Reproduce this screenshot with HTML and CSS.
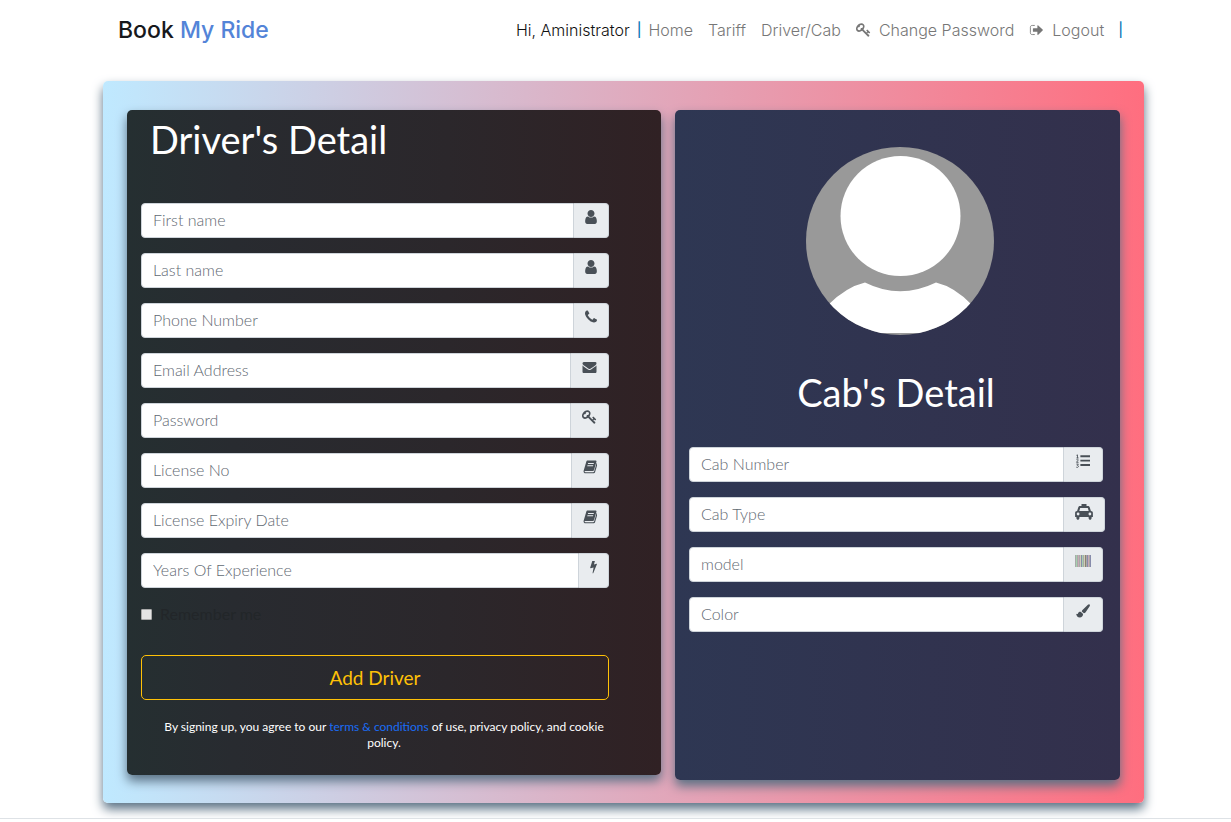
FILE: index.html
```html
<!DOCTYPE html>
<html lang="en">
<head>
<meta charset="utf-8">
<title>Book My Ride</title>
<link rel="stylesheet" href="styles.css">
</head>
<body>
<svg class="sprite" aria-hidden="true">
  <symbol id="user" viewBox="256 128 1280 1536"><path d="M1536 1399q0 109-62.5 187t-150.5 78h-854q-88 0-150.5-78t-62.5-187q0-85 8.5-160.5t31.5-152 58.5-131 94-89 134.5-34.5q131 128 313 128t313-128q76 0 134.5 34.5t94 89 58.5 131 31.5 152 8.5 160.5zm-256-887q0 159-112.5 271.5t-271.5 112.5-271.5-112.5-112.5-271.5 112.5-271.5 271.5-112.5 271.5 112.5 112.5 271.5z"/></symbol>
  <symbol id="phone" viewBox="192 128 1408 1536"><path d="M1600 1240q0 27-10 70.5t-21 68.5q-21 50-122 106-94 51-186 51-27 0-53-3.5t-57.5-12.5-47-14.5-55.5-20.5-49-18q-98-35-175-83-127-79-264-216t-216-264q-48-77-83-175-3-9-18-49t-20.5-55.5-14.5-47-12.5-57.5-3.5-53q0-92 51-186 56-101 106-122 25-11 68.5-21t70.5-10q14 0 21 3 18 6 53 76 11 19 30 54t35 63.5 31 53.5q3 4 17.5 25t21.5 35.5 7 28.5q0 20-28.5 50t-62 55-62 53-28.5 46q0 9 5 22.5t8.5 20.5 14 24 11.5 19q76 137 174 235t235 174q2 1 19 11.5t24 14 20.5 8.5 22.5 5q18 0 46-28.5t53-62 55-62 50-28.5q14 0 28.5 7t35.5 21.5 25 17.5q25 15 53.5 31t63.5 35 54 30q70 35 76 53 3 7 3 21z"/></symbol>
  <symbol id="envelope" viewBox="0 0 1792 1792"><path d="M1792 710v794q0 66-47 113t-113 47h-1472q-66 0-113-47t-47-113v-794q44 49 101 87 362 246 497 345 57 42 92.5 65.5t94.5 48 110 24.5h2q51 0 110-24.5t94.5-48 92.5-65.5q170-123 498-345 57-39 100-87zm0-294q0 79-49 151t-122 123q-376 261-468 325-10 7-42.5 31t-54 38.5-52 32.5-57.5 27-50 9h-2q-23 0-50-9t-57.5-27-52-32.5-54-38.5-42.5-31q-91-64-262-182.5t-205-142.5q-62-42-117-115.5t-55-136.5q0-78 41.5-130t118.5-52h1472q65 0 112.5 47t47.5 113z"/></symbol>
  <symbol id="key" viewBox="64 96 1664 1664"><path d="M832 512q0-80-56-136t-136-56-136 56-56 136q0 42 19 83-41-19-83-19-80 0-136 56t-56 136 56 136 136 56 136-56 56-136q0-42-19-83 41 19 83 19 80 0 136-56t56-136zm851 704q0 17-49 66t-66 49q-9 0-28.5-16t-36.5-33-38.5-40-24.5-26l-96 96 220 220q28 28 28 68 0 42-39 81t-81 39q-40 0-68-28l-671-671q-176 131-365 131-163 0-265.5-102.5t-102.5-265.5q0-160 95-313t248-248 313-95q163 0 265.5 102.5t102.5 265.5q0 189-131 365l355 355 96-96q-3-3-26-24.5t-40-38.5-33-36.5-16-28.5q0-17 49-66t66-49q13 0 23 10 6 6 46 44.5t82 79.5 86.5 86 73 78 28.5 41z"/></symbol>
  <symbol id="book" viewBox="0 1 15 15"><path fill-rule="evenodd" d="M5 1.500h8.300c.9 0 1.400.6 1.100 1.500l-2.600 8.700c-.3.8-.8 1.100-1.600 1.100H2.400c-.5 0-.8.3-.6.8.1.3.4.4.9.4h8.100c.6 0 .9-.3 1.100-.8l2.700-8.900c.8.4 1 .9.8 1.600l-2.500 8.100c-.3.9-.9 1.200-1.800 1.200H2.600C1.300 15.200.3 14 .7 12.600L3.500 3C3.800 2 4.200 1.500 5 1.500zM5.500 4.200 5.200 5.300h6.200l.3-1.100zM4.800 6.500l-.3 1.100h6.200l.3-1.100z"/></symbol>
  <symbol id="bolt" viewBox="0 1 8 14"><path d="M2.600 1h3L4.500 5l3.100-.7c.4 0 .5.2.3.6L3.700 15h-.8L4.100 8.500.7 9.300c-.4 0-.5-.2-.5-.5z"/></symbol>
  <symbol id="list" viewBox="0 0 16 16"><path d="M5 1.500h11v2.200H5zM5 6.500h11v2.200H5zM5 11.500h11v2.200H5z"/><path fill="none" stroke="currentColor" d="M.5 1.500 1.700 1v3.500M.5 4.500h2.500M.5 6.500c1-1 2.200-.5 2 .4L.6 9.500h2.300M.4 11.500h2.300L1.500 13c2 0 1.500 2.500-.2 2.400l-1-.4"/></symbol>
  <symbol id="taxi" viewBox="0 0 18 16"><path fill-rule="evenodd" d="M6.500 0h5v2h1.300c1 0 1.600.4 1.900 1.300L15.900 7c1.300.1 2 .9 2 2v4h-1.300v1c0 2.400-3 2.400-3 0v-1H4.400v1c0 2.400-3 2.400-3 0v-1H.1V9c0-1.100.7-1.900 2-2l1.200-3.700C3.600 2.400 4.200 2 5.200 2h1.300zM5.200 4 4.300 7h9.400l-.9-3zM3.100 8.600a1.400 1.400 0 1 0 0 2.800 1.400 1.400 0 0 0 0-2.800zm11.800 0a1.400 1.400 0 1 0 0 2.800 1.400 1.400 0 0 0 0-2.800z"/></symbol>
  <symbol id="brush" viewBox="0 0 16 16"><path d="M15.500.6c.6.6.5 1.300.1 2L11 9.400c-.6.8-1.200 1.100-2 1.300L6.600 8.500c.1-.8.500-1.400 1.100-2L13.600.9c.6-.5 1.300-.8 1.900-.3zM5.700 9.200l2.400 2.300C8 14 6.500 15.400 4.400 15.400 1.800 15.400.6 13.700.2 11c1.100.8 1.700.7 2-.1.600-1.600 2-2.300 3.500-1.700z"/></symbol>
  <symbol id="logout" viewBox="0 0 16 16"><path fill="none" stroke="currentColor" d="M6 2.800H3.200C1.800 2.800 1 3.500 1 5v6c0 1.500.8 2.200 2.200 2.200H6"/><path d="M4.500 6H9V3.200c0-.7.5-.9 1-.4l5 4.700c.4.400.4.700 0 1.100l-5 4.700c-.5.5-1 .3-1-.4V10H4.500c-.4 0-.6-.2-.6-.6V6.600c0-.4.200-.6.600-.6z"/></symbol>
  <symbol id="barcode" viewBox="0 0 16 12"><path fill="#a7aaa9" d="M0 0h16v12H0z"/><path fill="#a6cfae" d="M1 0h1v12H1zM7 0h1v12H7z"/><path fill="#c9aab5" d="M3 0h1v12H3zM13 0h1v12h-1z"/><path fill="#d0ceb6" d="M5 0h1v12H5zM9 0h1v12H9z"/><path fill="#878cab" d="M6 0h1v12H6zM12 0h1v12h-1zM15 0h1v12h-1z"/><path fill="#8c8270" d="M10 0h1v12h-1z"/></symbol>
</svg>

<header class="header">
  <a class="brand" href="#">Book <span class="brand-accent">My Ride</span></a>
  <nav class="nav">
    <span class="greeting">Hi, Aministrator</span>
    <span class="divider">|</span>
    <a href="#">Home</a>
    <a href="#">Tariff</a>
    <a href="#">Driver/Cab</a>
    <a href="#"><svg class="icon"><use href="#key"/></svg>Change Password</a>
    <a href="#"><svg class="icon"><use href="#logout"/></svg>Logout</a>
    <span class="divider">|</span>
  </nav>
</header>

<main class="main">
  <form class="board">
    <section class="card driver">
      <h1 class="title">Driver's Detail</h1>
      <div class="fields">
        <div class="field"><input type="text" placeholder="First name" aria-label="First name"><span class="addon"><svg class="icon narrow"><use href="#user"/></svg></span></div>
        <div class="field"><input type="text" placeholder="Last name" aria-label="Last name"><span class="addon"><svg class="icon narrow"><use href="#user"/></svg></span></div>
        <div class="field"><input type="tel" placeholder="Phone Number" aria-label="Phone Number"><span class="addon"><svg class="icon narrow"><use href="#phone"/></svg></span></div>
        <div class="field"><input type="email" placeholder="Email Address" aria-label="Email Address"><span class="addon"><svg class="icon"><use href="#envelope"/></svg></span></div>
        <div class="field"><input type="password" placeholder="Password" aria-label="Password"><span class="addon"><svg class="icon"><use href="#key"/></svg></span></div>
        <div class="field"><input type="text" placeholder="License No" aria-label="License No"><span class="addon"><svg class="icon book"><use href="#book"/></svg></span></div>
        <div class="field"><input type="text" placeholder="License Expiry Date" aria-label="License Expiry Date"><span class="addon"><svg class="icon book"><use href="#book"/></svg></span></div>
        <div class="field"><input type="text" placeholder="Years Of Experience" aria-label="Years Of Experience"><span class="addon"><svg class="icon bolt"><use href="#bolt"/></svg></span></div>
      </div>
      <label class="remember"><input type="checkbox">Remember me</label>
      <button class="submit" type="button">Add Driver</button>
      <p class="terms">By signing up, you agree to our <a href="#">terms &amp; conditions</a> of use, privacy policy, and cookie policy.</p>
    </section>

    <section class="card cab">
      <svg class="avatar" viewBox="0 0 188 188" role="img" aria-label="Profile picture">
        <clipPath id="round"><circle cx="94" cy="94" r="94"/></clipPath>
        <g clip-path="url(#round)">
          <path fill="#999" d="M0 0h188v188H0z"/>
          <circle cx="94.500" cy="69" r="60" fill="#fff"/>
          <path fill="#fff" d="M59 135.500Q94 153 130 135.500Q149 140 166 158V186H22V158Q40 140 59 135.500z"/>
        </g>
      </svg>
      <h2 class="title">Cab's Detail</h2>
      <div class="fields">
        <div class="field"><input type="text" placeholder="Cab Number" aria-label="Cab Number"><span class="addon"><svg class="icon wide"><use href="#list"/></svg></span></div>
        <div class="field taxi-field"><input type="text" placeholder="Cab Type" aria-label="Cab Type"><span class="addon"><svg class="icon taxi"><use href="#taxi"/></svg></span></div>
        <div class="field"><input type="text" placeholder="model" aria-label="model"><span class="addon"><svg class="icon wide"><use href="#barcode"/></svg></span></div>
        <div class="field"><input type="text" placeholder="Color" aria-label="Color"><span class="addon"><svg class="icon wide"><use href="#brush"/></svg></span></div>
      </div>
    </section>
  </form>
</main>
<footer class="footer"></footer>
</body>
</html>
```
FILE: styles.css
```css
* { box-sizing: border-box; }

body {
  margin: 0;
  background: #fff;
  color: #212529;
  font: 16px/22px Lato, "Open Sans", sans-serif;
}

a { text-decoration: none; }
.sprite { display: none; }

.icon {
  display: block;
  width: 15px;
  height: 14px;
  fill: currentColor;
}

.header {
  display: flex;
  justify-content: space-between;
  align-items: center;
  height: 60px;
  padding: 0 108px 0 118px;
  font-family: Inter, "Open Sans", sans-serif;
}

.brand {
  color: #17181c;
  font-size: 23px;
  font-weight: 500;
}

.brand-accent { color: #5384d8; }

.nav {
  display: flex;
  align-items: center;
  gap: 15px;
  font-size: 16px;
  font-weight: 300;
}

.nav a {
  display: flex;
  align-items: center;
  gap: 8px;
  color: #777;
}

.greeting { color: #111; }
.divider { color: #0878b8; font-size: 14px; font-weight: 500; }
.greeting + .divider { margin: 0 -8px; }
.divider:last-child { margin-left: -1px; }

.main { padding: 21px 87px 15px 103px; }

.board {
  display: grid;
  grid-template-columns: 534fr 445fr;
  align-items: start;
  gap: 14px;
  padding: 29px 24px 23px;
  border-radius: 5px;
  background: linear-gradient(to right, #bfe9ff, #ff6e7f);
  box-shadow: 0 6px 11px #5a7184;
}

.card {
  border-radius: 5px;
  box-shadow: 0 6px 11px #5a7184;
}

.driver {
  padding: 4px 52px 24px 14px;
  background: linear-gradient(to right, #252f31, #282b30 20%, #2b272b 60%, #302124);
}

.cab {
  padding: 37px 17px 148px 14px;
  background: linear-gradient(to right, #2e3753, #33304c);
}

.title {
  margin: 0;
  color: #fff;
  font-size: 38px;
  font-weight: 400;
  line-height: 50px;
}

.driver .title { padding-left: 9px; }
.cab .title { margin: 32px 0 30px; text-align: center; }

.avatar {
  display: block;
  width: 188px;
  height: 188px;
  margin-left: calc(50% - 90px);
}

.fields {
  display: grid;
  gap: 15px;
}

.driver .fields { margin-top: 39px; }
.field { display: flex; height: 35px; }
.taxi-field { margin-right: -2px; }

.field input {
  flex: 1;
  min-width: 0;
  padding: 0 11px 2px;
  border: 1px solid #ced4da;
  border-radius: 4px 0 0 4px;
  background: #fff;
  font: inherit;
  font-weight: 300;
}

.field input::placeholder { color: #5f6972; opacity: 1; }

.addon {
  padding: 6px 11px;
  border: 1px solid #ced4da;
  border-left: 0;
  border-radius: 0 4px 4px 0;
  background: #e9ecef;
  color: #495057;
}

.narrow { width: 12px; }
.book { width: 14px; }
.bolt { width: 7px; }
.wide { width: 16px; }
.taxi { width: 18px; height: 16px; }

.remember {
  display: flex;
  align-items: center;
  gap: 8px;
  margin-top: 15px;
  color: #222629;
}

.remember input {
  appearance: none;
  width: 11px;
  height: 11px;
  margin: 0;
  border: 1px solid #aaa;
  border-radius: 1px;
  background: #e4e4e4;
}

.submit {
  display: block;
  width: 100%;
  height: 45px;
  margin-top: 30px;
  border: 1px solid #ffc107;
  border-radius: 5px;
  background: transparent;
  color: #ffc107;
  font: 19px/28px Lato, sans-serif;
}

.terms {
  margin: 19px 0 0 18px;
  color: #fff;
  font-size: 12px;
  line-height: 16px;
  text-align: center;
}

.terms a { color: #1a6cf5; }
.footer { border-top: 1px solid #dee2e6; }
```
